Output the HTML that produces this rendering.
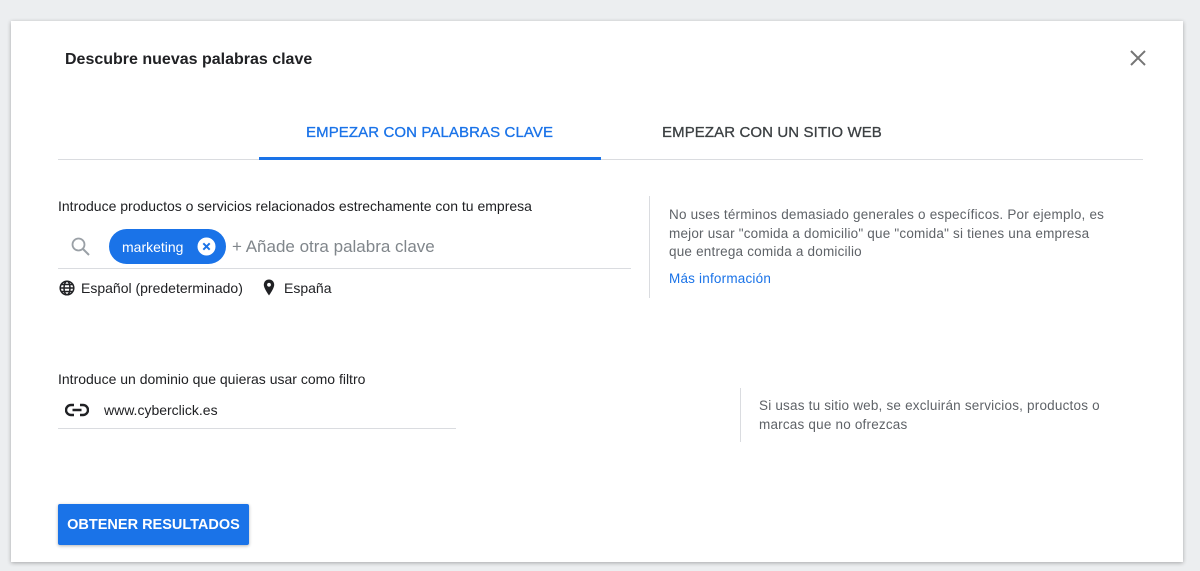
<!DOCTYPE html>
<html><head><meta charset="utf-8"><style>
*{margin:0;padding:0;box-sizing:border-box}
body{width:1200px;height:571px;background:#eceef0;font-family:"Liberation Sans",sans-serif;position:relative;overflow:hidden}
.card{position:absolute;left:11px;top:21px;width:1172px;height:541px;background:#fff;box-shadow:0 1px 4px rgba(0,0,0,.3)}
.a{position:absolute;white-space:nowrap}
</style></head><body>
<div class="card"></div>
<div class="a" style="left:65px;top:51px;font-size:16px;font-weight:bold;color:#202124">Descubre nuevas palabras clave</div>
<svg class="a" style="left:1129px;top:49px" width="18" height="18" viewBox="0 0 18 18"><path d="M2 2L16 16M16 2L2 16" stroke="#757575" stroke-width="2"/></svg>
<div class="a" style="left:306px;top:124px;font-size:15px;color:#1a73e8;letter-spacing:.1px;-webkit-text-stroke:.3px #1a73e8">EMPEZAR CON PALABRAS CLAVE</div>
<div class="a" style="left:662px;top:124px;font-size:15px;color:#3c4043;letter-spacing:.1px;-webkit-text-stroke:.3px #3c4043">EMPEZAR CON UN SITIO WEB</div>
<div class="a" style="left:58px;top:159px;width:1085px;height:1px;background:#dadce0"></div>
<div class="a" style="left:259px;top:157px;width:342px;height:3px;background:#1a73e8"></div>
<div class="a" style="left:58px;top:198px;font-size:14px;color:#202124">Introduce productos o servicios relacionados estrechamente con tu empresa</div>
<svg class="a" style="left:70px;top:236px" width="22" height="22" viewBox="0 0 22 22"><circle cx="8.5" cy="8.5" r="6" fill="none" stroke="#9aa0a6" stroke-width="1.8"/><path d="M13 13L19 19" stroke="#9aa0a6" stroke-width="2"/></svg>
<div class="a" style="left:109px;top:229px;width:117px;height:35px;border-radius:18px;background:#1a73e8"></div>
<div class="a" style="left:122px;top:239px;font-size:14px;color:#fff">marketing</div>
<svg class="a" style="left:197px;top:237px" width="19" height="19" viewBox="0 0 19 19"><circle cx="9.5" cy="9.5" r="9" fill="#fff"/><path d="M6.3 6.3L12.7 12.7M12.7 6.3L6.3 12.7" stroke="#1a73e8" stroke-width="2"/></svg>
<div class="a" style="left:232px;top:237px;font-size:17px;color:#80868b">+ Añade otra palabra clave</div>
<div class="a" style="left:58px;top:268px;width:573px;height:1px;background:#dadce0"></div>
<svg class="a" style="left:59px;top:280px" width="16" height="16" viewBox="0 0 16 16" fill="none" stroke="#202124" stroke-width="1.5"><circle cx="8" cy="8" r="6.8"/><ellipse cx="8" cy="8" rx="3" ry="6.8"/><path d="M1.2 8H14.8M2.5 4.5H13.5M2.5 11.5H13.5"/></svg>
<div class="a" style="left:81px;top:280px;font-size:14px;color:#202124">Español (predeterminado)</div>
<svg class="a" style="left:263px;top:279px" width="12" height="17" viewBox="0 0 12 17"><path d="M6 0.5C3 0.5 0.8 2.8 0.8 5.8C0.8 9.5 6 16.5 6 16.5S11.2 9.5 11.2 5.8C11.2 2.8 9 0.5 6 0.5Z" fill="#202124"/><circle cx="6" cy="5.8" r="1.9" fill="#fff"/></svg>
<div class="a" style="left:284px;top:280px;font-size:14px;color:#202124">España</div>
<div class="a" style="left:649px;top:196px;width:1px;height:102px;background:#dadce0"></div>
<div class="a" style="left:669px;top:206px;font-size:13.5px;line-height:18.5px;color:#5f6368;letter-spacing:.2px">No uses términos demasiado generales o específicos. Por ejemplo, es<br>mejor usar "comida a domicilio" que "comida" si tienes una empresa<br>que entrega comida a domicilio</div>
<div class="a" style="left:669px;top:271px;font-size:13.5px;color:#1a73e8;letter-spacing:.2px">Más información</div>
<div class="a" style="left:58px;top:371px;font-size:14px;color:#202124">Introduce un dominio que quieras usar como filtro</div>
<svg class="a" style="left:65px;top:403px" width="24" height="14" viewBox="0 0 24 14" fill="none" stroke="#202124" stroke-width="2.4"><path d="M9 2H6a5 5 0 0 0 0 10h3M15 2h3a5 5 0 0 1 0 10h-3M7.5 7h9"/></svg>
<div class="a" style="left:104px;top:402px;font-size:14px;color:#202124">www.cyberclick.es</div>
<div class="a" style="left:58px;top:428px;width:398px;height:1px;background:#dadce0"></div>
<div class="a" style="left:740px;top:388px;width:1px;height:54px;background:#dadce0"></div>
<div class="a" style="left:759px;top:397px;font-size:13.5px;line-height:18.5px;color:#5f6368;letter-spacing:.2px">Si usas tu sitio web, se excluirán servicios, productos o<br>marcas que no ofrezcas</div>
<div class="a" style="left:58px;top:504px;width:191px;height:41px;background:#1a73e8;border-radius:2px;box-shadow:0 1px 3px rgba(0,0,0,.3)"></div>
<div class="a" style="left:58px;top:517px;width:191px;text-align:center;font-size:14.5px;font-weight:bold;color:#fff;letter-spacing:0">OBTENER RESULTADOS</div>
</body></html>
